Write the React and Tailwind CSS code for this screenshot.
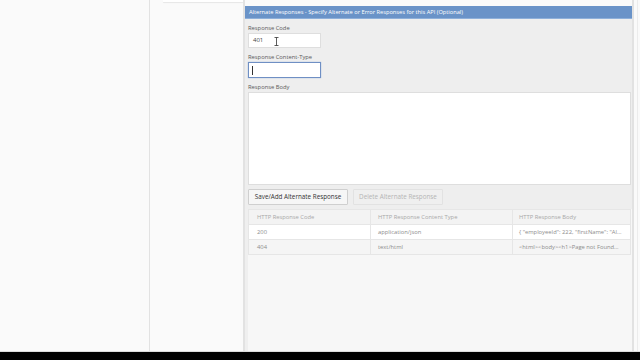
import React from "react";

const FONT = { fontFamily: '"Open Sans", "Liberation Sans", sans-serif' };

const ROWS = [
  { code: "200", type: "application/json", body: '{ "employeeId": 222, "firstName": "Al...' },
  { code: "404", type: "text/html", body: "<html><body><h1>Page not Found..." },
];

function Field({ label, children }) {
  return (
    <div className="flex flex-col">
      <label className="h-[10px] leading-[10px] text-[5.8px] text-[#5a5a5a]">{label}</label>
      {children}
    </div>
  );
}

export default function App() {
  return (
    <div className="w-[640px] h-[360px] bg-[#fafafa] flex flex-col overflow-hidden" style={FONT}>
      <div className="flex h-[352px] border-b border-[#dcdcdc]">
        {/* left nav column */}
        <div className="w-[150px] shrink-0 border-r border-[#e2e2e2]" />

        {/* gutter with bottom of card above */}
        <div className="w-[93px] shrink-0 pl-[13px]">
          <div className="h-[2px] bg-white shadow-[0_1px_1px_rgba(0,0,0,0.08)]" />
        </div>

        {/* alternate responses panel */}
        <div className="w-[391px] shrink-0 flex flex-col border-l-[2px] border-r-[2px] border-[#e2e2e2] pt-[6px]">
          <div className="h-[13px] leading-[13px] bg-[#6a93c8] text-white text-[5.7px] pl-[4px] border-b border-[#8fb0da] whitespace-nowrap overflow-hidden">
            Alternate Responses - Specify Alternate or Error Responses for this API (Optional)
          </div>

          <div className="bg-[#eeeeee] pl-[3px] pr-[1px] pt-[4px] flex flex-col gap-[4px]">
            <Field label="Response Code">
              <div className="relative w-[73px] h-[15px] bg-white border border-[#dedede] flex items-center px-[4px] text-[6px] text-[#444]">
                401
                <svg className="absolute left-[25px] top-[3px]" width="5" height="9" viewBox="0 0 5 9">
                  <path d="M0.5 0.5h4M2.5 0.5v8M0.5 8.5h4" stroke="#333" strokeWidth="0.8" fill="none" />
                </svg>
              </div>
            </Field>
            <Field label="Response Content-Type">
              <div className="w-[73px] h-[16px] bg-white border border-[#6f8fc4] shadow-[0_0_1px_#8aa9d8] flex items-center px-[3px]">
                <span className="w-[1px] h-[9px] bg-[#333]" />
              </div>
            </Field>
            <Field label="Response Body">
              <div className="h-[93px] bg-white border border-[#dedede]" />
            </Field>
            <div className="flex gap-[5px] pb-[4px]">
              <button className="w-[100px] h-[16px] bg-[#f6f6f6] border border-[#cfcfcf] rounded-[1px] text-[6.3px] text-[#333]">
                Save/Add Alternate Response
              </button>
              <button className="w-[90px] h-[16px] bg-[#efefef] border border-[#e2e2e2] rounded-[1px] text-[6.3px] text-[#b5b5b5]">
                Delete Alternate Response
              </button>
            </div>
          </div>

          <div className="flex-1 bg-[#f7f7f7] border-l-[3px] border-[#efefef] pr-[1px]">
            <table className="w-[383px] border-collapse text-[5.8px] table-fixed">
              <colgroup>
                <col className="w-[122px]" />
                <col className="w-[142px]" />
                <col />
              </colgroup>
              <thead>
                <tr className="h-[15px] bg-[#f3f3f3] text-[#a8a8a8]">
                  <th className="font-normal text-left pl-[8px] border border-[#e6e6e6]">HTTP Response Code</th>
                  <th className="font-normal text-left pl-[7px] border border-[#e6e6e6]">HTTP Response Content Type</th>
                  <th className="font-normal text-left pl-[6px] border border-[#e6e6e6]">HTTP Response Body</th>
                </tr>
              </thead>
              <tbody>
                {ROWS.map((r, i) => (
                  <tr key={r.code} className={i === 0 ? "h-[15px] bg-white text-[#8c8c8c]" : "h-[15px] bg-[#f5f5f5] text-[#8c8c8c]"}>
                    <td className="pl-[8px] border border-[#e6e6e6]">{r.code}</td>
                    <td className="pl-[7px] border border-[#e6e6e6]">{r.type}</td>
                    <td className="pl-[6px] border border-[#e6e6e6] whitespace-nowrap overflow-hidden">{r.body}</td>
                  </tr>
                ))}
              </tbody>
            </table>
          </div>
        </div>

        <div className="flex-1 border-l border-[#ececec] ml-[3px]" />
      </div>
      <div className="flex-1 bg-black" />
    </div>
  );
}
